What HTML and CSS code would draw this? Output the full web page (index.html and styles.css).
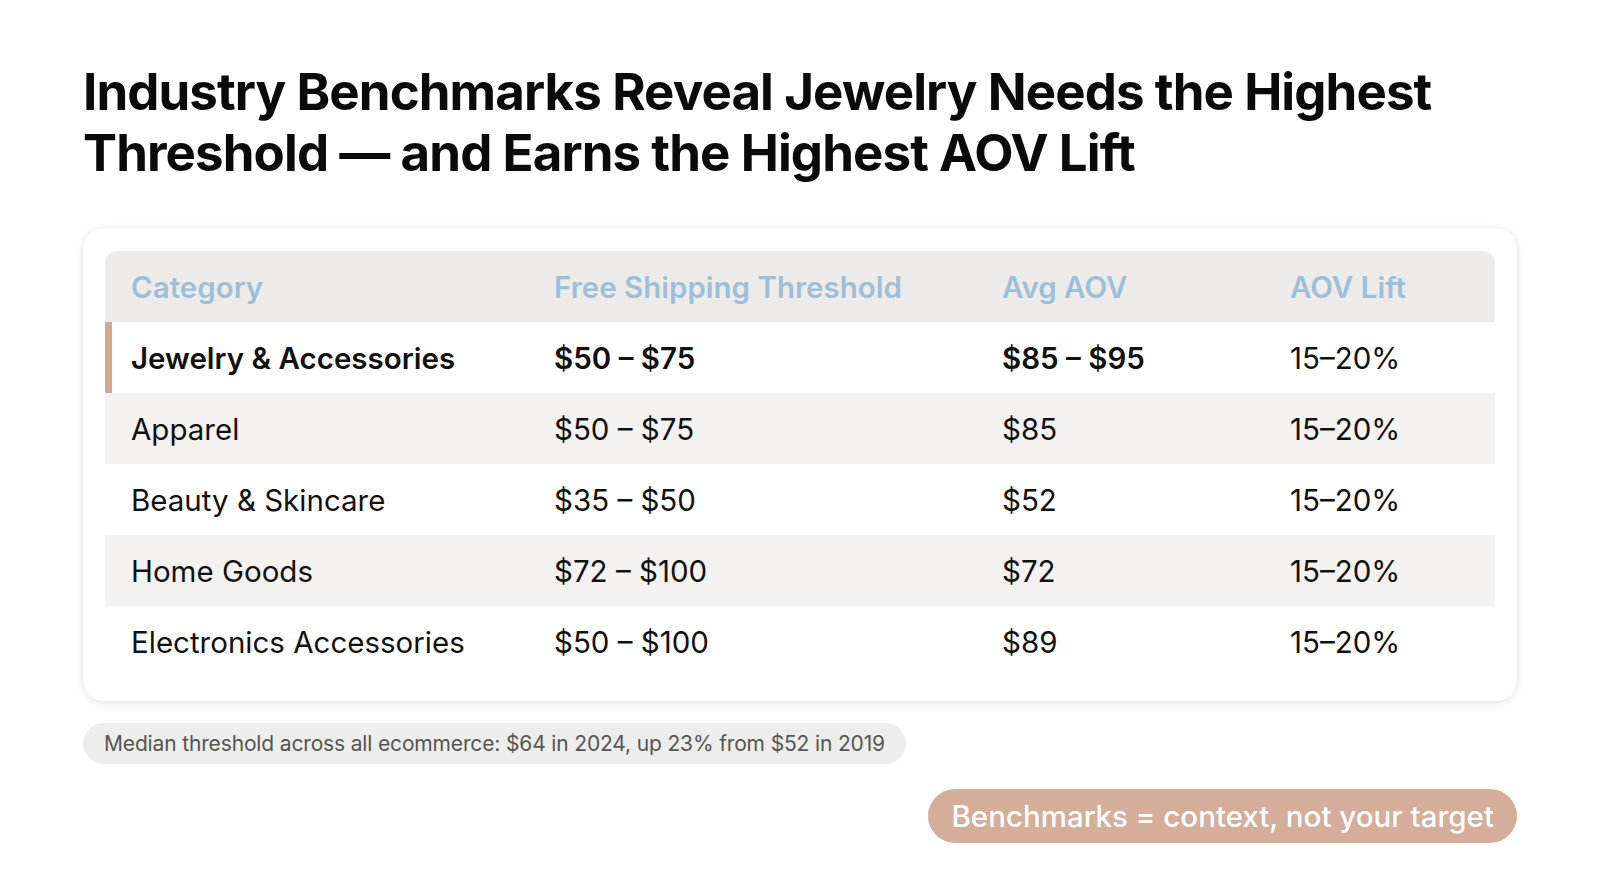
FILE: index.html
```html
<!DOCTYPE html>
<html>
<head>
<meta charset="utf-8">
<link rel="stylesheet" href="styles.css">
</head>
<body>
<main class="slide">
  <h1 class="title">Industry Benchmarks Reveal Jewelry Needs the Highest Threshold — and Earns the Highest AOV Lift</h1>
  <section class="card">
    <div class="table">
      <div class="row head">
        <div class="cell">Category</div>
        <div class="cell">Free Shipping Threshold</div>
        <div class="cell">Avg AOV</div>
        <div class="cell">AOV Lift</div>
      </div>
      <div class="row hl">
        <div class="cell strong">Jewelry &amp; Accessories</div>
        <div class="cell strong">$50 – $75</div>
        <div class="cell strong">$85 – $95</div>
        <div class="cell">15–20%</div>
      </div>
      <div class="row alt">
        <div class="cell">Apparel</div>
        <div class="cell">$50 – $75</div>
        <div class="cell">$85</div>
        <div class="cell">15–20%</div>
      </div>
      <div class="row">
        <div class="cell">Beauty &amp; Skincare</div>
        <div class="cell">$35 – $50</div>
        <div class="cell">$52</div>
        <div class="cell">15–20%</div>
      </div>
      <div class="row alt">
        <div class="cell">Home Goods</div>
        <div class="cell">$72 – $100</div>
        <div class="cell">$72</div>
        <div class="cell">15–20%</div>
      </div>
      <div class="row">
        <div class="cell">Electronics Accessories</div>
        <div class="cell">$50 – $100</div>
        <div class="cell">$89</div>
        <div class="cell">15–20%</div>
      </div>
    </div>
  </section>
  <div class="note">Median threshold across all ecommerce: $64 in 2024, up 23% from $52 in 2019</div>
  <div class="cta-wrap"><div class="cta">Benchmarks = context, not your target</div></div>
</main>
</body>
</html>
```

FILE: styles.css
```css
* { box-sizing: border-box; }
html, body { margin: 0; padding: 0; background: #ffffff; }
body { font-family: "Inter", "Noto Sans", sans-serif; color: #111; }
.slide {
  width: 1600px;
  height: 893px;
  padding: 61px 83px 0 83px;
  display: flex;
  flex-direction: column;
  align-items: flex-start;
}
.title {
  margin: 0;
  font-size: 51px;
  line-height: 61px;
  font-weight: 700;
  letter-spacing: -0.9px;
  color: #0a0a0a;
  width: 1400px;
}
.card {
  margin-top: 45px;
  width: 1434px;
  background: #fff;
  border-radius: 20px;
  box-shadow: 0 2px 10px rgba(0,0,0,0.10), 0 0 2px rgba(0,0,0,0.06);
  padding: 23px 22px 24px 22px;
}
.table { display: flex; flex-direction: column; }
.row {
  display: grid;
  grid-template-columns: 423px 448px 288px 1fr;
  height: 71px;
  align-items: center;
  font-size: 29.5px;
  color: #111;
}
.row.head {
  background: #ecebea;
  border-radius: 12px 12px 0 0;
  height: 71px;
  color: #9cbfd9;
  font-weight: 600;
}
.row.alt { background: #f3f2f1; }
.row.hl { box-shadow: inset 7px 0 0 #d3a893; }
.cell { padding-left: 26px; white-space: nowrap; }
.strong { font-weight: 600; }
.note {
  margin-top: 22px;
  height: 41px;
  line-height: 41px;
  padding: 0 21px;
  background: #ededec;
  border-radius: 21px;
  font-size: 21px;
  color: #555;
  letter-spacing: -0.15px;
}
.cta-wrap { width: 1434px; display: flex; justify-content: flex-end; margin-top: 25px; }
.cta {
  height: 54px;
  line-height: 54px;
  padding: 0 23px;
  background: #d4ad9b;
  border-radius: 27px;
  color: #fff;
  font-size: 29.5px;
  font-weight: 500;
}
```
